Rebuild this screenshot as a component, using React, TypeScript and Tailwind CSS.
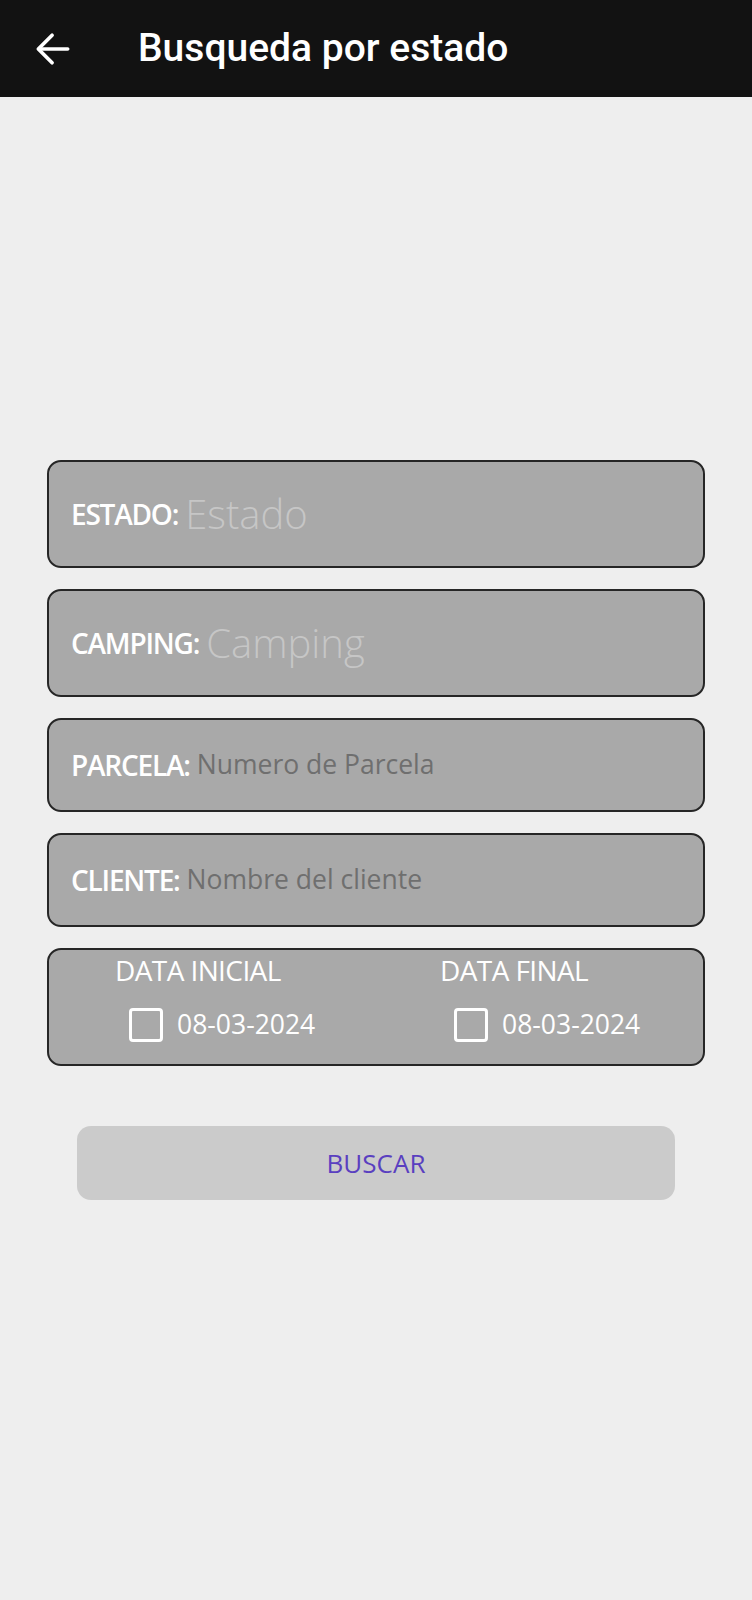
const font = { fontFamily: '"Open Sans", "Noto Sans", sans-serif' };

function BackArrow() {
  return (
    <svg width="44" height="44" viewBox="0 0 24 24" fill="none" stroke="#ffffff" strokeWidth="2" strokeLinecap="round" strokeLinejoin="round">
      <path d="M20 12H4.5" />
      <path d="M11.5 4.5L4 12l7.5 7.5" />
    </svg>
  );
}

function FieldBox({ label, placeholder, big }: { label: string; placeholder: string; big?: boolean }) {
  return (
    <div
      className={`flex items-center rounded-[14px] border-2 border-[#262626] bg-[#a9a9a9] pl-[22px] ${big ? 'h-[108px]' : 'h-[94px]'}`}
    >
      <span className="text-[28px] font-semibold tracking-[-1.2px] text-white">{label}</span>
      <span
        className={
          big
            ? 'ml-[7px] text-[40px] font-light text-[#c6c6c6]'
            : 'ml-[7px] text-[26.5px] text-[#6f6f6f]'
        }
      >
        {placeholder}
      </span>
    </div>
  );
}

function DateColumn({ label, value, className }: { label: string; value: string; className?: string }) {
  return (
    <div className={`flex flex-col ${className ?? ''}`}>
      <span className="text-[28px] leading-[34px] tracking-[-0.6px] text-white">{label}</span>
      <div className="mt-[18px] ml-[14px] flex items-center gap-[14px]">
        <span className="h-[34px] w-[34px] rounded-[4px] border-[3px] border-white" />
        <span className="text-[26.5px] text-white">{value}</span>
      </div>
    </div>
  );
}

export default function App() {
  return (
    <div className="min-h-[1600px] bg-[#eeeeee]" style={font}>
      <header className="flex h-[97px] items-center bg-[#121212]">
        <div className="ml-[31px] flex">
          <BackArrow />
        </div>
        <h1
          className="ml-[63px] text-[39px] font-medium text-white"
          style={{ fontFamily: 'Roboto, "Noto Sans", sans-serif' }}
        >
          Busqueda por estado
        </h1>
      </header>

      <main className="flex flex-col gap-[21px] px-[47px] pt-[363px]">
        <FieldBox label="ESTADO:" placeholder="Estado" big />
        <FieldBox label="CAMPING:" placeholder="Camping" big />
        <FieldBox label="PARCELA:" placeholder="Numero de Parcela" />
        <FieldBox label="CLIENTE:" placeholder="Nombre del cliente" />

        <div className="flex h-[118px] rounded-[14px] border-2 border-[#262626] bg-[#a9a9a9] pt-[3px] pl-[66px]">
          <DateColumn label="DATA INICIAL" value="08-03-2024" className="w-[325px]" />
          <DateColumn label="DATA FINAL" value="08-03-2024" className="flex-1" />
        </div>

        <div className="mt-[39px] px-[30px]">
          <button
            type="button"
            className="h-[74px] w-full rounded-[14px] bg-[#cbcbcb] text-[26px] text-[#5a3fc0]"
          >
            BUSCAR
          </button>
        </div>
      </main>
    </div>
  );
}
